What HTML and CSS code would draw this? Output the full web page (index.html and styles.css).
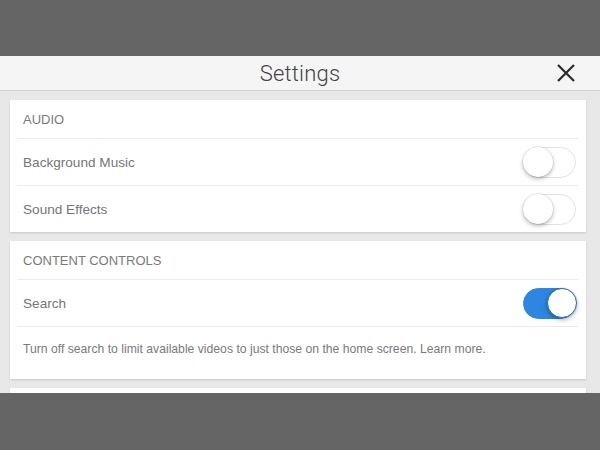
FILE: index.html
```html
<!DOCTYPE html>
<html lang="en">
<head>
    <meta charset="UTF-8">
    <title>Settings</title>
    <link rel="stylesheet" href="styles.css">
</head>
<body>
    <div class="screen">
        <div class="band"></div>
        <div class="sheet">
            <div class="header">
                <h1>Settings</h1>
                <button class="close" type="button" aria-label="Close">
                    <svg width="20" height="20" viewBox="0 0 20 20">
                        <path d="M2 2 L18 18 M18 2 L2 18" stroke="#2b2b2b" stroke-width="2.2" fill="none"/>
                    </svg>
                </button>
            </div>
            <div class="content">
                <div class="card">
                    <div class="section-title">AUDIO</div>
                    <div class="row">
                        <span>Background Music</span>
                        <span class="toggle"></span>
                    </div>
                    <div class="row">
                        <span>Sound Effects</span>
                        <span class="toggle"></span>
                    </div>
                </div>
                <div class="card">
                    <div class="section-title">CONTENT CONTROLS</div>
                    <div class="row">
                        <span>Search</span>
                        <span class="toggle on"></span>
                    </div>
                    <div class="note">Turn off search to limit available videos to just those on the home screen. Learn more.</div>
                </div>
                <div class="card"></div>
            </div>
        </div>
        <div class="band"></div>
    </div>
</body>
</html>
```

FILE: styles.css
```css
body {
    margin: 0;
    font-family: "Liberation Sans", Arial, sans-serif;
    overflow: hidden;
}
.screen {
    display: grid;
    grid-template-rows: 56px 337px 57px;
    height: 450px;
}
.band {
    background-color: #656565;
}
.sheet {
    display: flex;
    flex-direction: column;
    overflow: hidden;
    background: #e8e8e8;
}
.header {
    height: 34px;
    flex-shrink: 0;
    display: flex;
    align-items: center;
    justify-content: center;
    position: relative;
    background: #f5f5f5;
    border-bottom: 1px solid #d2d2d2;
}
h1 {
    margin: 0;
    font-family: Roboto, "Liberation Sans", sans-serif;
    font-weight: 300;
    font-size: 22px;
    color: #444;
    letter-spacing: 0.2px;
}
.close {
    position: absolute;
    right: 23px;
    top: 6px;
    width: 22px;
    height: 22px;
    padding: 0;
    border: none;
    background: none;
    display: flex;
    align-items: center;
    justify-content: center;
}
.content {
    display: flex;
    flex-direction: column;
    gap: 9px;
    padding: 9px 14px 0 10px;
}
.card {
    background: #fff;
    padding: 0 8px 0 7px;
    box-shadow: 0 1px 2px rgba(0, 0, 0, 0.15);
    flex-shrink: 0;
}
.card:last-child {
    height: 40px;
}
.section-title {
    height: 38px;
    display: flex;
    align-items: center;
    padding-left: 6px;
    font-size: 13px;
    color: #7a7a7a;
}
.row {
    height: 46px;
    display: flex;
    align-items: center;
    justify-content: space-between;
    padding: 0 2px 0 6px;
    border-top: 1px solid #ececec;
    font-size: 13.6px;
    color: #767676;
}
.note {
    height: 53px;
    display: flex;
    align-items: center;
    padding: 0 0 8px 6px;
    border-top: 1px solid #ececec;
    font-size: 12.2px;
    color: #7a7a7a;
    box-sizing: border-box;
}
.toggle {
    width: 53px;
    height: 31px;
    border-radius: 16px;
    box-sizing: border-box;
    border: 1.5px solid #e2e2e2;
    background: #fff;
    display: flex;
    align-items: center;
    justify-content: flex-start;
}
.toggle::after {
    content: "";
    width: 30px;
    height: 30px;
    margin-left: -1.5px;
    border-radius: 50%;
    background: #fff;
    box-shadow: 0 2px 4px rgba(0, 0, 0, 0.28), 0 0 0 0.5px rgba(0, 0, 0, 0.1);
}
.toggle.on {
    background: #2d87e0;
    border-color: #2d87e0;
    justify-content: flex-end;
}
.toggle.on::after {
    margin-left: 0;
    margin-right: -1.5px;
    border: 1.5px solid #2a6db5;
    box-sizing: border-box;
}
```
